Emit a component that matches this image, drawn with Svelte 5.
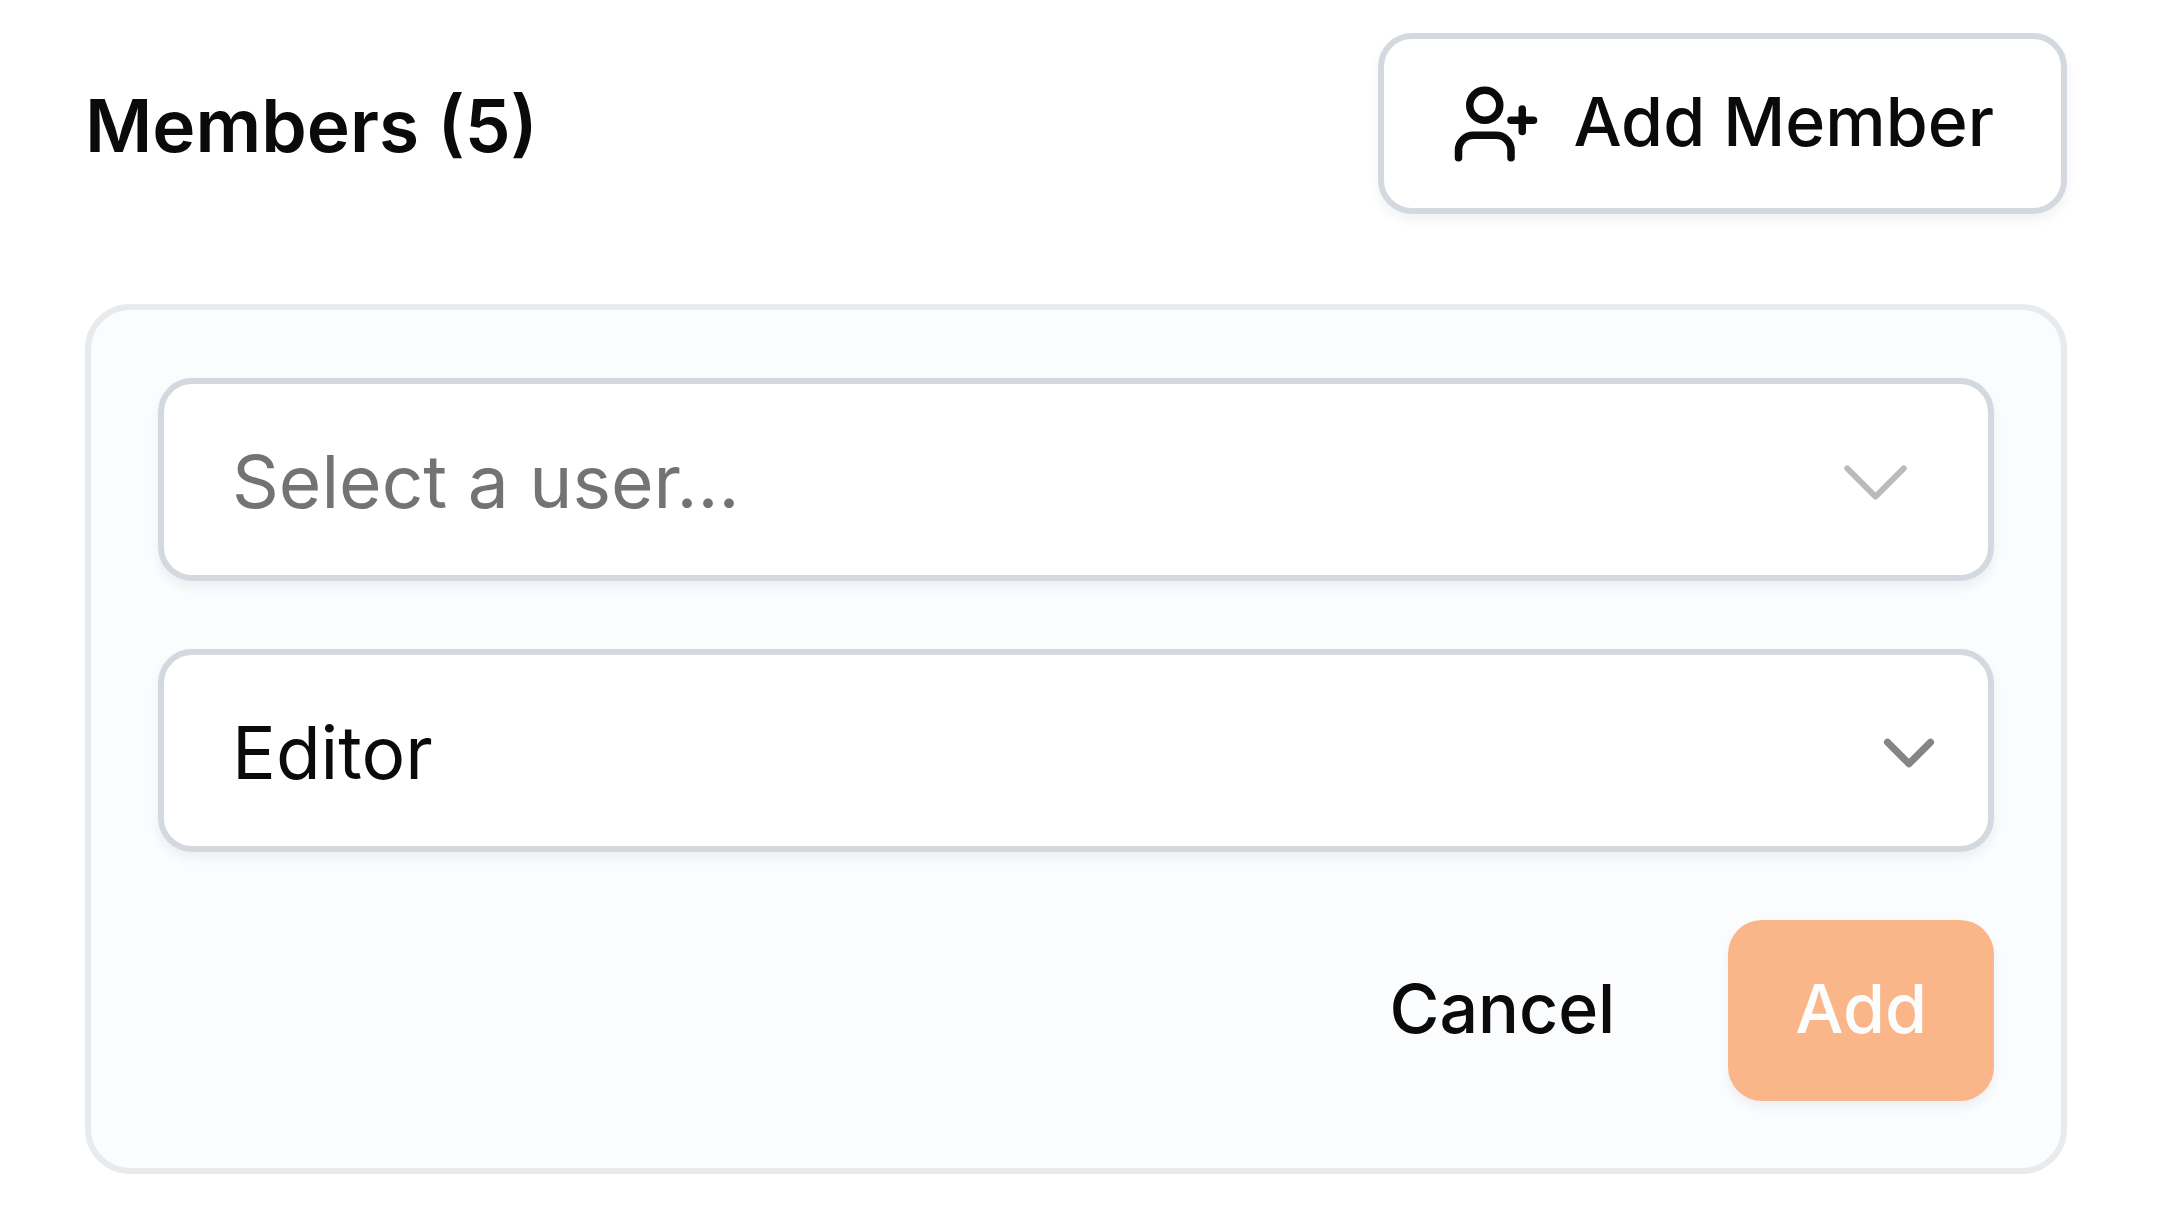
<script>
  let adding = $state(true);
  let user = $state('');
  let role = $state('Editor');
  const memberCount = 5;
  const roles = ['Viewer', 'Editor', 'Admin'];
</script>

<main class="members">
  <header class="header">
    <h2 class="title">Members ({memberCount})</h2>
    <button class="button outline" type="button" onclick={() => (adding = true)}>
      <svg class="icon" viewBox="0 0 24 24" aria-hidden="true">
        <path d="M16 21v-2a4 4 0 0 0-4-4H6a4 4 0 0 0-4 4v2" />
        <circle cx="9" cy="7" r="4" />
        <path d="M19 8v6M22 11h-6" />
      </svg>
      <span class="label">Add Member</span>
    </button>
  </header>

  {#if adding}
    <form class="panel" onsubmit={(e) => e.preventDefault()}>
      <div class="field">
        <input
          class="control"
          type="text"
          role="combobox"
          aria-label="User"
          aria-expanded="false"
          aria-controls="user-options"
          placeholder="Select a user..."
          bind:value={user}
        />
        <button class="toggle" type="button" aria-label="Show users">
          <svg class="chevron large" viewBox="0 0 24 24" aria-hidden="true">
            <path d="m6 9 6 6 6-6" />
          </svg>
        </button>
      </div>

      <div class="field stacked">
        <select class="control" aria-label="Role" bind:value={role}>
          {#each roles as name}
            <option>{name}</option>
          {/each}
        </select>
        <svg class="chevron small" viewBox="0 0 24 24" aria-hidden="true">
          <path d="m6 9 6 6 6-6" />
        </svg>
      </div>

      <div class="actions">
        <button class="button" type="button" onclick={() => (adding = false)}>
          <span class="label">Cancel</span>
        </button>
        <button class="button primary" type="submit" disabled={!user}>
          <span class="label">Add</span>
        </button>
      </div>
    </form>
  {/if}
</main>

<style>
  :global(body) {
    margin: 0;
    background: #fff;
  }

  .members {
    box-sizing: border-box;
    padding: 33px 90px 34px 85px;
    display: flex;
    flex-direction: column;
    gap: 90px;
    color: #0a0a0a;
    font-family: Inter, 'Liberation Sans', sans-serif;
  }

  .header {
    display: flex;
    align-items: center;
    justify-content: space-between;
  }

  .title {
    margin: 0;
    padding-top: 4px;
    font-size: 73px;
    line-height: 112px;
    font-weight: 600;
  }

  .button {
    box-sizing: border-box;
    height: 181px;
    padding: 0 67px;
    display: inline-flex;
    align-items: center;
    justify-content: center;
    gap: 32px;
    border: 0;
    border-radius: 34px;
    background: transparent;
    color: inherit;
    font: 500 68px/90px Inter, 'Liberation Sans', sans-serif;
    white-space: nowrap;
  }

  .label {
    padding-bottom: 6px;
  }

  .outline {
    border: 6px solid #d3d9df;
    background: #fff;
    box-shadow: 0 6px 11px rgba(15, 40, 70, 0.06);
  }

  .primary {
    background: #fab588;
    color: #fcfdff;
    box-shadow: 0 6px 11px rgba(15, 40, 70, 0.06);
  }

  .icon,
  .chevron {
    flex: none;
    fill: none;
    stroke: currentColor;
    stroke-width: 2;
    stroke-linecap: round;
    stroke-linejoin: round;
  }

  .icon {
    width: 90px;
    height: 90px;
  }

  .panel {
    padding: 68px 67px 67px;
    display: flex;
    flex-direction: column;
    gap: 68px;
    border: 6px solid #e7ebee;
    border-radius: 45px;
    background: #fbfcfe;
  }

  .field {
    box-sizing: border-box;
    height: 203px;
    display: flex;
    align-items: stretch;
    overflow: hidden;
    border: 6px solid #d3d9df;
    border-radius: 34px;
    background: #fff;
    box-shadow: 0 6px 11px rgba(15, 40, 70, 0.06);
  }

  .control {
    box-sizing: border-box;
    flex: 1;
    min-width: 0;
    width: 100%;
    margin: 0;
    padding: 5px 68px 0;
    border: 0;
    outline: 0;
    appearance: none;
    background: transparent;
    color: #0a0a0a;
    font: 400 73px/112px Inter, 'Liberation Sans', sans-serif;
  }

  .control::placeholder {
    color: #737373;
    opacity: 1;
  }

  .toggle {
    padding: 5px 56px 0 0;
    display: flex;
    align-items: center;
    border: 0;
    background: transparent;
    color: #bababa;
  }

  .stacked {
    display: grid;
    align-items: center;
  }

  .stacked > * {
    grid-area: 1 / 1;
  }

  .stacked .control {
    height: 100%;
  }

  .chevron.large {
    width: 113px;
    height: 113px;
    stroke-width: 1.25;
  }

  .chevron.small {
    width: 86px;
    height: 86px;
    margin: 4px 36px 0 0;
    justify-self: end;
    color: #858585;
    pointer-events: none;
  }

  .actions {
    display: flex;
    justify-content: flex-end;
    gap: 46px;
  }
</style>
